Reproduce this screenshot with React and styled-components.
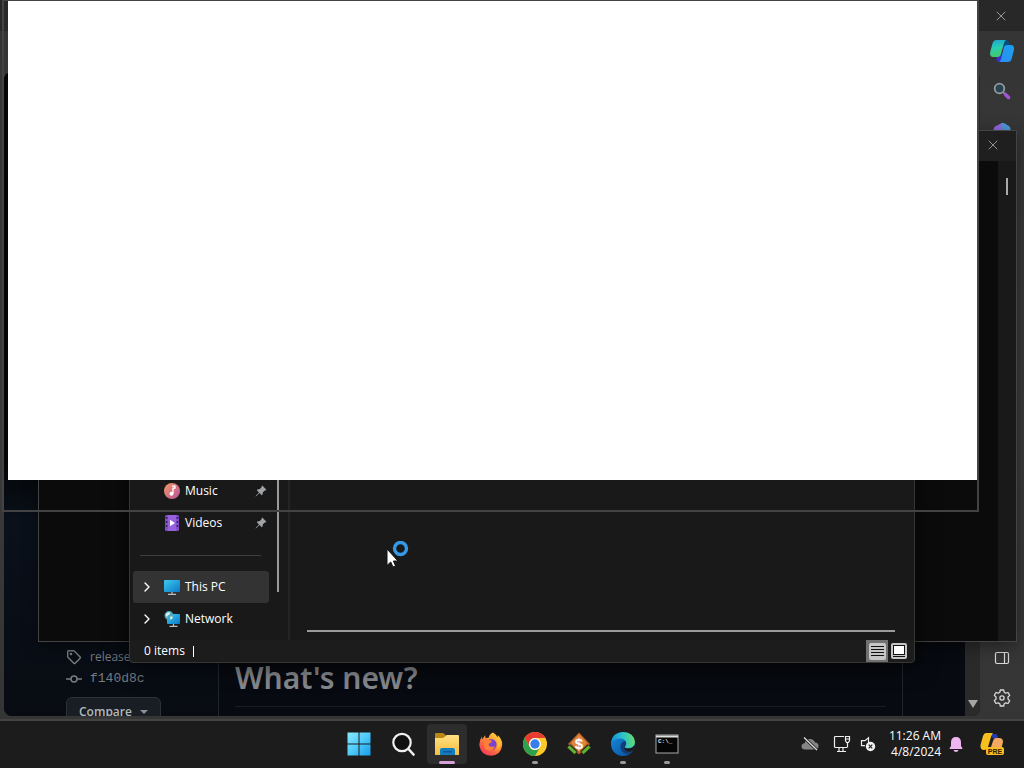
import React from "react";
import styled, { createGlobalStyle } from "styled-components";
import { ChevronRight, X } from "lucide-react";

const GlobalStyle = createGlobalStyle`
  *, *::before, *::after { box-sizing: border-box; }
  html, body, #root { height: 100%; }
  body {
    margin: 0;
    overflow: hidden;
    background: #1c1c1c;
    color: #fff;
    font: 12px/16px "Open Sans", "Noto Sans", sans-serif;
  }
  button { font: inherit; color: inherit; border: 0; padding: 0; background: none; }
  a { color: inherit; text-decoration: none; }
  svg { display: block; flex: none; }
`;

const Desktop = styled.div`
  display: flex;
  flex-direction: column;
  height: 100vh;
  min-height: 600px;
`;

const Workspace = styled.main`
  position: relative;
  flex: 1;
  overflow: hidden;
`;

/* ---------- Browser ---------- */

const BrowserWindow = styled.section`
  position: absolute;
  inset: 0;
  display: flex;
  flex-direction: column;
  background: linear-gradient(#343434, #3a3a3a 60%, #353535);
  border-bottom: 2px solid #444;
  padding: 0 0 3px 4px;
`;

const BrowserTitle = styled.header`
  display: flex;
  justify-content: flex-end;
  align-items: center;
  height: 31px;
  margin-left: -4px;
  padding-right: 15px;
  background: #282828;
  color: #a0a0a0;
`;

const BrowserBody = styled.div`
  display: flex;
  flex: 1;
  min-height: 0;
`;

const Viewport = styled.div`
  flex: 1;
  display: flex;
  margin-top: 41px;
  border-radius: 8px;
  overflow: hidden;
  background: #070a10;
`;

const ReleaseAside = styled.aside`
  display: flex;
  flex-direction: column;
  justify-content: flex-end;
  align-items: flex-start;
  width: 215px;
  padding-left: 62px;
  border-right: 1px solid #22262c;
  background: linear-gradient(#040506 60%, #0a111b 70%, #080b12);
`;

const MetaLink = styled.a`
  display: flex;
  align-items: center;
  gap: 8px;
  height: 22px;
  color: #777c83;
  white-space: nowrap;
  font-family: ${(p) => (p.$mono ? '"Liberation Mono", monospace' : "inherit")};
  font-size: ${(p) => (p.$mono ? "13px" : "12px")};
`;

const CompareButton = styled.button`
  display: flex;
  align-items: center;
  gap: 8px;
  height: 32px;
  margin: 7px 0 -13px;
  padding: 0 12px 2px;
  border: 1px solid #2c3137;
  border-radius: 6px;
  background: #191e24;
  color: #b2b7bc;
  font-weight: 600;
`;

const Article = styled.article`
  flex: 1;
  display: flex;
  flex-direction: column;
  justify-content: flex-end;
  padding: 0 16px 9px;
  border-right: 1px solid #22262c;
`;

const Heading = styled.h2`
  margin: 0;
  padding-bottom: 8px;
  border-bottom: 1px solid #191d23;
  color: #85888d;
  font-size: 30px;
  line-height: 40px;
  font-weight: 600;
  font-family: "Noto Sans", "Open Sans", sans-serif;
`;

const PageGutter = styled.div`
  width: 62px;
`;

const PageScroll = styled.div`
  display: flex;
  flex-direction: column;
  justify-content: flex-end;
  align-items: center;
  width: 15px;
  padding-bottom: 8px;
  background: #2a2a2a;
`;

const EdgeRail = styled.nav`
  display: flex;
  flex-direction: column;
  align-items: center;
  gap: 16px;
  width: 44px;
  padding: 8px 0 6px;
  color: #d8d8d8;
`;

const RailButton = styled.button`
  display: grid;
  place-items: center;
  width: 24px;
  height: 24px;
  margin-top: ${(p) => (p.$pushDown ? "auto" : "0")};
`;

/* ---------- Terminal ---------- */

const TerminalWindow = styled.section`
  position: absolute;
  inset: 130px 7px 79px 38px;
  display: flex;
  flex-direction: column;
  border: 1px solid #444;
  background: #0b0b0b;
  box-shadow: 0 4px 16px rgba(0, 0, 0, 0.4);
`;

const TerminalTitle = styled.header`
  display: flex;
  justify-content: flex-end;
  align-items: center;
  height: 30px;
  padding: 0 15px 2px 0;
  background: #1f1f1f;
  color: #999;
`;

const TerminalScroll = styled.div`
  align-self: flex-end;
  display: flex;
  justify-content: center;
  flex: 1;
  width: 18px;
  padding-top: 17px;
  background: #191919;
`;

const TerminalThumb = styled.span`
  width: 2px;
  height: 17px;
  background: #aaa;
`;

/* ---------- File Explorer ---------- */

const ExplorerWindow = styled.section`
  position: absolute;
  inset: 160px 109px 58px 129px;
  display: flex;
  flex-direction: column;
  border: 1px solid #363636;
  border-radius: 0 0 4px 4px;
  background: #1c1c1c;
  box-shadow: 0 2px 24px rgba(0, 0, 0, 0.7);
`;

const ExplorerBody = styled.div`
  display: flex;
  flex: 1;
  min-height: 0;
`;

const NavPane = styled.nav`
  display: flex;
  flex-direction: column;
  justify-content: flex-end;
  width: 139px;
  padding: 0 0 5px 3px;
  background: #191919;
`;

const NavItem = styled.a`
  display: flex;
  align-items: center;
  gap: 5px;
  height: 32px;
  padding: 0 2px 0 6px;
  border-radius: 3px;
  background: ${(p) => (p.$selected ? "#333" : "none")};
`;

const ChevronSlot = styled.span`
  display: flex;
  width: 20px;
`;

const NavLabel = styled.span`
  flex: 1;
`;

const NavRule = styled.hr`
  width: 121px;
  height: 1px;
  margin: 16px 0 15px 7px;
  border: 0;
  background: #3e3e3e;
`;

const NavScroll = styled.div`
  width: 21px;
  padding: 0 0 48px 8px;
  border-right: 2px solid #242424;
  background: #191919;
`;

const NavThumb = styled.div`
  width: 2px;
  height: 100%;
  background: #9a9a9a;
`;

const FilePane = styled.div`
  flex: 1;
  display: flex;
  align-items: flex-end;
  padding: 0 19px 8px 17px;
  background: #191919;
`;

const HorizontalThumb = styled.div`
  flex: 1;
  height: 2px;
  background: #9a9a9a;
`;

const StatusBar = styled.footer`
  display: flex;
  align-items: center;
  height: 22px;
  padding: 0 4px 0 14px;
`;

const StatusText = styled.span`
  flex: 1;
  display: flex;
  align-items: center;
  gap: 8px;
`;

const StatusTick = styled.span`
  width: 1px;
  height: 11px;
  background: #fff;
`;

const ViewButton = styled.button`
  display: grid;
  place-items: center;
  width: 22px;
  height: 22px;
  background: ${(p) => (p.$active ? "#717171" : "none")};
`;

/* ---------- Unpainted window ---------- */

const BlankWindow = styled.section`
  position: absolute;
  inset: 0 45px 209px 2px;
  display: flex;
  border: 2px solid #434343;
  border-top-width: 1px;
`;

const BlankClient = styled.div`
  flex: 1;
  margin: 0 0 30px 4px;
  background: #fff;
`;

const Cursor = styled.div`
  position: absolute;
  left: 386px;
  top: 541px;
`;

/* ---------- Taskbar ---------- */

const Taskbar = styled.footer`
  display: grid;
  grid-template-columns: 1fr auto 1fr;
  align-items: center;
  height: 47px;
  padding-bottom: 1px;
  background: #1c1c1c;
`;

const AppList = styled.div`
  grid-column: 2;
  display: flex;
  gap: 4px;
  padding-left: 2px;
`;

const AppButton = styled.button`
  position: relative;
  display: grid;
  place-items: center;
  width: 40px;
  height: 40px;
  border-radius: 4px;
  background: ${(p) => (p.$state === "active" ? "#2d2d2d" : "none")};
  &::after {
    content: "";
    display: ${(p) => (p.$state ? "block" : "none")};
    position: absolute;
    bottom: 0;
    width: ${(p) => (p.$state === "active" ? "16px" : "6px")};
    height: 3px;
    border-radius: 2px;
    background: ${(p) => (p.$state === "active" ? "#d8a0d8" : "#9a9a9a")};
  }
`;

const Tray = styled.div`
  display: flex;
  justify-content: flex-end;
  align-items: center;
  padding-right: 8px;
`;

const TrayButton = styled.button`
  display: grid;
  place-items: center;
  width: ${(p) => p.$width || 28}px;
  height: 32px;
`;

const Clock = styled.button`
  width: 68px;
  padding-right: 3px;
  text-align: right;
  line-height: 16px;
  white-space: nowrap;
`;

/* ---------- Drawings ---------- */

const Close = () => <X size={16} strokeWidth={1.4} />;

const Pin = () => (
  <svg width="12" height="12" viewBox="0 0 12 12" fill="#a0a4a6">
    <path d="M7.3.6 11.4 4.7 10.5 5.5 9.8 5.4 7.9 7.2 7.5 9.6 6.7 10.2 4.5 8 1.2 11.2.6 11.4.8 10.8 4 7.5 1.8 5.3 2.4 4.5 4.8 4.1 6.6 2.2 6.5 1.4Z" />
  </svg>
);

const MusicIcon = () => (
  <svg width="16" height="16" viewBox="0 0 16 16">
    <defs>
      <linearGradient id="music" x1="0" y1="0" x2="1" y2="1">
        <stop stopColor="#f29a68" /><stop offset="1" stopColor="#b9509a" />
      </linearGradient>
    </defs>
    <circle cx="8" cy="8" r="8" fill="url(#music)" />
    <path d="M8 3.2h3v2H9v5.4" fill="none" stroke="#fff" strokeWidth="1.3" />
    <circle cx="7.5" cy="10.7" r="2" fill="#fff" />
  </svg>
);

const VideoIcon = () => (
  <svg width="16" height="16" viewBox="0 0 16 16">
    <rect x="1" y="0" width="14" height="16" rx="1.5" fill="#8250c8" />
    <rect x="4" y="0" width="8" height="16" fill="#965fdb" />
    <path d="M2.5 2v12M13.5 2v12" stroke="#38205c" strokeWidth="1.6" strokeDasharray="2 2" />
    <path d="m6 4.7 5 3.3-5 3.3Z" fill="#fff" />
  </svg>
);

const ScreenIcon = ({ globe }) => (
  <svg width="16" height="16" viewBox="0 0 16 16">
    <defs>
      <linearGradient id="screen" x1="0" y1="0" x2="1" y2="1">
        <stop stopColor="#3ecbf0" /><stop offset="1" stopColor="#0a78c8" />
      </linearGradient>
    </defs>
    {globe ? <rect x="3" y="3" width="13" height="10" rx="1" fill="url(#screen)" /> : <rect y="1" width="16" height="12" rx="1" fill="url(#screen)" />}
    <path d={globe ? "M9.5 13v2M5.5 15.4h8" : "M8 13v2M4 15.3h8"} stroke="#b7c0c7" strokeWidth="1.2" />
    {globe && (
      <g>
        <circle cx="5" cy="4.6" r="4.5" fill="#4aaac0" />
        <path d="M1.3 3.6Q3 1 5.5.9L6.2 3 3.6 4.7 3 6.6ZM6 5.5l3 .2Q8.3 8 6.5 8.7Z" fill="#d9f2ee" />
      </g>
    )}
  </svg>
);

const TagIcon = () => (
  <svg width="16" height="16" viewBox="0 0 16 16" fill="none" stroke="#777c83" strokeWidth="1.4" strokeLinejoin="round">
    <path d="M1.7 2.6q0-.9.9-.9H8l6.1 6.2q.7.6 0 1.3l-5 5q-.6.6-1.3 0L1.7 8Z" />
    <circle cx="5" cy="5" r=".6" fill="#777c83" />
  </svg>
);

const CommitIcon = () => (
  <svg width="16" height="16" viewBox="0 0 16 16" fill="none" stroke="#777c83" strokeWidth="1.5">
    <circle cx="8" cy="8" r="3" />
    <path d="M0 8h5M11 8h5" />
  </svg>
);

const CopilotIcon = () => (
  <svg width="24" height="24" viewBox="0 0 24 24">
    <defs>
      <linearGradient id="copA" x1="0" y1="0" x2=".2" y2="1">
        <stop stopColor="#1f9fd4" /><stop offset=".5" stopColor="#28cdb2" /><stop offset="1" stopColor="#42c96b" />
      </linearGradient>
      <linearGradient id="copB" x1="0" y1="1" x2="1" y2="0">
        <stop stopColor="#2d8cf2" /><stop offset="1" stopColor="#1aa0ee" />
      </linearGradient>
    </defs>
    <path d="M6 16h8l-3 7H9q-3 0-2.500-3.500Z" fill="#3430c8" />
    <path d="M13 1h3q3 0 3.500 5L13 10Z" fill="#084f7c" />
    <path d="M6 1h10q-1.500 1-2 3L11 15q-.8 3-3.500 3H3Q-.5 18 .2 13L2.600 4Q3.600 1 6 1Z" fill="url(#copA)" />
    <path d="M17 6h4q3.600 0 2.900 5l-2.300 9q-.9 3-3.600 3H9q1.500-1 2-3l2.700-11q.8-3 3.300-3Z" fill="url(#copB)" />
  </svg>
);

const RailSearchIcon = () => (
  <svg width="18" height="18" viewBox="0 0 18 18" fill="none">
    <circle cx="6.5" cy="6.5" r="4.800" fill="#284451" stroke="#939b9f" strokeWidth="1.800" />
    <path d="m10 10 2 2" stroke="#888" strokeWidth="2" />
    <path d="m12.500 12.500 3 3" stroke="#a553d4" strokeWidth="3.500" strokeLinecap="round" />
  </svg>
);

const OfficeIcon = () => (
  <svg width="18" height="18" viewBox="0 0 18 18">
    <path d="M9 1 2 4.500Q.5 5.500.5 8v5L9 17Z" fill="#9169dc" />
    <path d="M8 1h3l5 3q1.500 1 1.500 3v5L11 9 8 7Z" fill="#4f96d8" />
  </svg>
);

const PanelIcon = () => (
  <svg width="16" height="16" viewBox="0 0 16 16" fill="none" stroke="currentColor" strokeWidth="1.2">
    <rect x="1.500" y="2.500" width="13" height="11" rx="1.500" />
    <path d="M10.500 2.500v11" />
  </svg>
);

const GearIcon = () => (
  <svg width="18" height="18" viewBox="0 0 18 18" fill="none" stroke="currentColor" strokeWidth="1.3" strokeLinejoin="round">
    <path d="M7.300 1h3.400l.5 2.300 1.500.9 2.300-.7 1.700 2.900L15 8v2l1.700 1.600-1.700 2.900-2.300-.7-1.500.9-.5 2.300H7.300l-.5-2.300-1.500-.9-2.300.7-1.700-2.900L3 10V8L1.300 6.400 3 3.500l2.300.7 1.500-.9Z" />
    <circle cx="9" cy="9" r="2.100" />
  </svg>
);

const DetailsIcon = () => (
  <svg width="17" height="17" viewBox="0 0 17 17">
    <rect width="17" height="17" rx="2" fill="#c6c6c6" />
    <path d="M2 3.500h13M2 6.500h13M2 9.500h13M2 12.500h13" stroke="#111" />
  </svg>
);

const PreviewIcon = () => (
  <svg width="16" height="16" viewBox="0 0 16 16">
    <rect width="16" height="16" rx="2" fill="#c6c6c6" />
    <rect x="2.500" y="2.500" width="11" height="9" fill="#fff" stroke="#111" />
    <path d="M2 13.500h12" stroke="#111" />
  </svg>
);

const StartIcon = () => (
  <svg width="24" height="24" viewBox="0 0 24 24">
    <defs>
      <linearGradient id="start" gradientUnits="userSpaceOnUse" x1="0" y1="0" x2="24" y2="24">
        <stop stopColor="#8cecfb" /><stop offset=".5" stopColor="#4fcafa" /><stop offset="1" stopColor="#149be8" />
      </linearGradient>
    </defs>
    <path fill="url(#start)" d="M.500.500h11v11H.500ZM12.500.500h11v11h-11ZM.500 12.500h11v11H.500ZM12.500 12.500h11v11h-11Z" />
  </svg>
);

const SearchIcon = () => (
  <svg width="24" height="24" viewBox="0 0 24 24" fill="none" stroke="#f0f0f0">
    <circle cx="11" cy="10.500" r="8.700" fill="#111" strokeWidth="2.200" />
    <path d="m17.500 17 5 5.500" strokeWidth="2.600" strokeLinecap="round" />
  </svg>
);

const FolderIcon = () => (
  <svg width="24" height="24" viewBox="0 0 24 24">
    <defs>
      <linearGradient id="folder" x1="0" y1="0" x2="0" y2="1">
        <stop stopColor="#ffe183" /><stop offset="1" stopColor="#f6bd3c" />
      </linearGradient>
    </defs>
    <path d="M0 2q0-1 1-1h7l4 3-3 3H0Z" fill="#bc8612" />
    <path d="M0 6h8l4-3h11q1 0 1 1v19H0Z" fill="url(#folder)" />
    <path d="M5 23v-5q0-2 2-2h11q2 0 2 2v5Z" fill="#147cc0" />
    <path d="M8 19h9v1.500H8Z" fill="#0a5a97" />
  </svg>
);

const FirefoxIcon = () => (
  <svg width="24" height="24" viewBox="0 0 24 24">
    <defs>
      <linearGradient id="fox" x1=".9" y1="0" x2=".2" y2="1">
        <stop stopColor="#ffe34a" /><stop offset=".45" stopColor="#ff9030" /><stop offset="1" stopColor="#f0315e" />
      </linearGradient>
    </defs>
    <path d="M14 .500q3 1.500 4.200 5 .8-1 .7-2.200Q24 8 23 14q-1.500 9.500-11 9.700Q2 23.500.5 14-.2 9 3 4.500l.2 3L6 3.200l.7 3q1.500-.7 3-.4Q10 2.500 14 .500Z" fill="url(#fox)" />
    <circle cx="12" cy="12.500" r="5.500" fill="#7943d5" />
    <path d="M6 8q3-2 5 0l2 1q-.5 2-3 2.500-1 2.500 2 3.200 2 .5 4-.7-1.500 4.500-6 4.500Q5 18 5 12Z" fill="#ff7f36" />
    <path d="M13 5q5 1 6 6 .5 5-3 8 6-3 5-10Q19 5 16 3q2 3-3 2Z" fill="#ffc43a" />
  </svg>
);

const ChromeIcon = () => (
  <svg width="24" height="24" viewBox="0 0 24 24">
    <circle cx="12" cy="12" r="12" fill="#ffca28" />
    <path d="M1.600 6A12 12 0 0 1 22.400 6H12A6 6 0 0 0 6.800 15Z" fill="#e63c32" />
    <path d="M1.600 6A12 12 0 0 0 12 24l5.200-9A6 6 0 0 1 6.800 15Z" fill="#2da14c" />
    <circle cx="12" cy="12" r="6" fill="#fff" />
    <circle cx="12" cy="12" r="4.700" fill="#367ee9" />
  </svg>
);

const MoneyText = styled.text`
  font: bold 15px "Liberation Sans", sans-serif;
  fill: #fff;
  text-anchor: middle;
`;

const MoneyIcon = () => (
  <svg width="24" height="24" viewBox="0 0 24 24">
    <path d="M12 .500 23 12 12 22.500 1 12Z" fill="#b95e25" />
    <path d="m12 2 8 9-8 9-8-9Z" fill="#df873e" />
    <path d="M1.500 14 9 21M22.500 14 15 21" stroke="#2c3a1c" strokeWidth="5" />
    <path d="M1.500 14.500 8.500 21M22.500 14.500 15.500 21" stroke="#62b432" strokeWidth="3" />
    <MoneyText x="12" y="17">$</MoneyText>
  </svg>
);

const EdgeIcon = () => (
  <svg width="24" height="24" viewBox="0 0 24 24">
    <defs>
      <linearGradient id="edgeTop" x1="0" y1=".5" x2="1" y2=".4">
        <stop stopColor="#1490d8" /><stop offset=".55" stopColor="#2fc4c6" /><stop offset="1" stopColor="#68dc64" />
      </linearGradient>
      <linearGradient id="edgeLow" x1="0" y1="0" x2="1" y2="1">
        <stop stopColor="#148fdf" /><stop offset="1" stopColor="#0c4a9c" />
      </linearGradient>
    </defs>
    <circle cx="12" cy="12" r="12" fill="url(#edgeLow)" />
    <path d="M0 11Q1 .5 12 0q11 .5 12 10-.5 6-6.500 6-4 0-3.700-1.500 2.200-2 1-5Q13 6 8.500 6.500 3 7 0 11Z" fill="url(#edgeTop)" />
    <path d="M14.500 9q-6 1-5 7 1.500 6 8 6l4-3.500q-5 2-7.500-1-1.500-2 .3-3.500 1.500-2 .2-5Z" fill="#123d78" />
    <path d="M13.800 14.500q-.8 2 3.700 2 4 0 6-3.500l.5 2q-1 3-3 4.200-4.500 1.300-7-1.200-1.500-2-.2-3.500Z" fill="#1c1c1c" />
  </svg>
);

const PromptText = styled.text`
  font: bold 6px "Liberation Mono", monospace;
  fill: #e5e5e5;
`;

const PromptIcon = () => (
  <svg width="24" height="20" viewBox="0 0 24 20">
    <rect x="1" y="1" width="22" height="18" fill="#050505" stroke="#aaa" />
    <path d="M1 2.500h22" stroke="#ddd" strokeWidth="2" />
    <PromptText x="3" y="9">C:\_</PromptText>
  </svg>
);

const CloudOffIcon = () => (
  <svg width="18" height="16" viewBox="0 0 18 16">
    <path d="M4 13.500q-3.500 0-3.500-3.200 0-2.800 3.200-3.100Q4.700 3 9 3q3.700 0 5 3.500 3.500.3 3.500 3.500T14 13.500Z" fill="#858585" />
    <path d="m3 1.500 13 12.500" stroke="#1c1c1c" strokeWidth="3" />
    <path d="m3 1.500 13 12.500" stroke="#ddd" strokeWidth="1.300" />
  </svg>
);

const EthernetIcon = () => (
  <svg width="18" height="18" viewBox="0 0 18 18" fill="none" stroke="#eee" strokeWidth="1.200">
    <path d="M11 1.500H2.500q-1 0-1 1v9q0 1 1 1H14M6 12.500v3.500M10 12.500v3.500M4 16.500h9M14.500 8v4.500" />
    <path d="M12.500 1.500h4v4l-1 2h-2l-1-2ZM12.500 4h4" />
  </svg>
);

const MuteIcon = () => (
  <svg width="16" height="16" viewBox="0 0 16 16" fill="none">
    <path d="M8.500 7V1.800L5 4.700H1.500v5H5" stroke="#eee" strokeWidth="1.200" />
    <circle cx="10.500" cy="10.500" r="4.700" fill="#f2f2f2" />
    <path d="m8.700 8.700 3.600 3.600m0-3.600-3.600 3.600" stroke="#222" strokeWidth="1.200" />
  </svg>
);

const BellIcon = () => (
  <svg width="16" height="17" viewBox="0 0 16 17" fill="#efb6f1">
    <path d="M8 1q5 0 5 5.500V10l1.500 2.300q.2.700-.7.700H2.200q-.9 0-.7-.7L3 10V6.500Q3 1 8 1ZM5.500 14h5q-.5 2-2.500 2t-2.500-2Z" />
  </svg>
);

const BadgeText = styled.text`
  font: bold 7px "Liberation Sans", sans-serif;
  fill: #302000;
  text-anchor: middle;
`;

const CopilotPreIcon = () => (
  <svg width="24" height="24" viewBox="0 0 24 24">
    <path d="M11 2h4q3 0 3 4l-4 3Z" fill="#243cad" />
    <path d="M6 1h7q-1 1-2 4L8 15q-1 3-4 3-4 0-3.500-5L3 4q1-3 3-3Z" fill="#f7bf1e" />
    <path d="M16 6h3q4 0 4 4l-2 8H10l3-9q1-3 3-3Z" fill="#f5a85f" />
    <rect x="6" y="15" width="18" height="8" rx="2" fill="#f9bd22" />
    <BadgeText x="15" y="22">PRE</BadgeText>
  </svg>
);

const BusyPointer = () => (
  <svg width="24" height="28" viewBox="0 0 24 28">
    <circle cx="14.500" cy="7.500" r="6" fill="none" stroke="#3399e8" strokeWidth="3.400" />
    <path d="M1 8v16.500l3.700-3.500 2.300 5 2.600-1-2.200-5H12Z" fill="#fff" stroke="#111" />
  </svg>
);

const apps = [
  { name: "Start", Icon: StartIcon },
  { name: "Search", Icon: SearchIcon },
  { name: "File Explorer", Icon: FolderIcon, state: "active" },
  { name: "Firefox", Icon: FirefoxIcon },
  { name: "Chrome", Icon: ChromeIcon, state: "open" },
  { name: "Ledger", Icon: MoneyIcon },
  { name: "Edge", Icon: EdgeIcon, state: "open" },
  { name: "Command Prompt", Icon: PromptIcon, state: "open" },
];

function NavRow({ label, icon, expandable, pinned, selected }) {
  return (
    <NavItem href="#" $selected={selected}>
      <ChevronSlot>{expandable && <ChevronRight size={16} strokeWidth={2} />}</ChevronSlot>
      {icon}
      <NavLabel>{label}</NavLabel>
      {pinned && <Pin />}
    </NavItem>
  );
}

export default function App() {
  return (
    <Desktop>
      <GlobalStyle />
      <Workspace>
        <BrowserWindow>
          <BrowserTitle>
            <button aria-label="Close browser"><Close /></button>
          </BrowserTitle>
          <BrowserBody>
            <Viewport>
              <ReleaseAside>
                <MetaLink href="#"><TagIcon />release</MetaLink>
                <MetaLink href="#" $mono><CommitIcon />f140d8c</MetaLink>
                <CompareButton>
                  Compare
                  <svg width="8" height="4" viewBox="0 0 8 4" fill="#8b9095"><path d="M0 0h8L4 4Z" /></svg>
                </CompareButton>
              </ReleaseAside>
              <Article><Heading>What's new?</Heading></Article>
              <PageGutter />
              <PageScroll>
                <svg width="10" height="8" viewBox="0 0 10 8" fill="#a5a5a5"><path d="M0 0h10L5 8Z" /></svg>
              </PageScroll>
            </Viewport>
            <EdgeRail>
              <RailButton aria-label="Copilot"><CopilotIcon /></RailButton>
              <RailButton aria-label="Search"><RailSearchIcon /></RailButton>
              <RailButton aria-label="Microsoft 365"><OfficeIcon /></RailButton>
              <RailButton aria-label="Hide sidebar" $pushDown><PanelIcon /></RailButton>
              <RailButton aria-label="Settings"><GearIcon /></RailButton>
            </EdgeRail>
          </BrowserBody>
        </BrowserWindow>

        <TerminalWindow>
          <TerminalTitle>
            <button aria-label="Close terminal"><Close /></button>
          </TerminalTitle>
          <TerminalScroll><TerminalThumb /></TerminalScroll>
        </TerminalWindow>

        <ExplorerWindow>
          <ExplorerBody>
            <NavPane>
              <NavRow label="Music" icon={<MusicIcon />} pinned />
              <NavRow label="Videos" icon={<VideoIcon />} pinned />
              <NavRule />
              <NavRow label="This PC" icon={<ScreenIcon />} expandable selected />
              <NavRow label="Network" icon={<ScreenIcon globe />} expandable />
            </NavPane>
            <NavScroll><NavThumb /></NavScroll>
            <FilePane><HorizontalThumb /></FilePane>
          </ExplorerBody>
          <StatusBar>
            <StatusText>0 items<StatusTick /></StatusText>
            <ViewButton $active aria-label="Details view"><DetailsIcon /></ViewButton>
            <ViewButton aria-label="Large icons view"><PreviewIcon /></ViewButton>
          </StatusBar>
        </ExplorerWindow>

        <BlankWindow>
          <BlankClient />
        </BlankWindow>
        <Cursor><BusyPointer /></Cursor>
      </Workspace>

      <Taskbar>
        <AppList>
          {apps.map(({ name, Icon, state }) => (
            <AppButton key={name} aria-label={name} $state={state}><Icon /></AppButton>
          ))}
        </AppList>
        <Tray>
          <TrayButton aria-label="OneDrive"><CloudOffIcon /></TrayButton>
          <TrayButton aria-label="Network" $width={36}><EthernetIcon /></TrayButton>
          <TrayButton aria-label="Volume" $width={16}><MuteIcon /></TrayButton>
          <Clock>11:26 AM<br />4/8/2024</Clock>
          <TrayButton aria-label="Notifications" $width={24}><BellIcon /></TrayButton>
          <TrayButton aria-label="Copilot preview" $width={48}><CopilotPreIcon /></TrayButton>
        </Tray>
      </Taskbar>
    </Desktop>
  );
}
